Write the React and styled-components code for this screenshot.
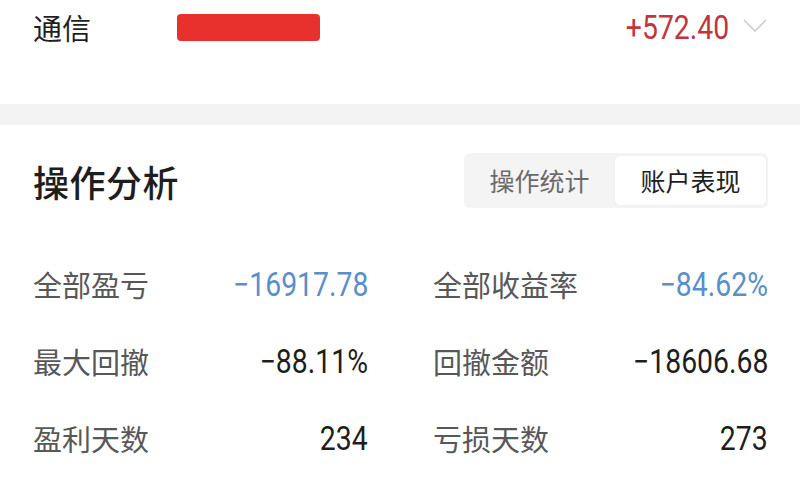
import React from "react"
import styled, { createGlobalStyle } from "styled-components"

const GlobalStyle = createGlobalStyle`
  html, body {
    margin: 0;
    padding: 0;
    background: #ffffff;
  }
  body {
    width: 800px;
    height: 500px;
    overflow: hidden;
    font-family: "Noto Sans CJK SC", "Noto Sans", sans-serif;
  }
`

const Page = styled.div`
  width: 800px;
`

const TopRow = styled.div`
  display: flex;
  align-items: center;
  height: 54px;
  padding: 0 32px 0 33px;
  margin-bottom: 50px;
`

const Industry = styled.span`
  font-size: 29px;
  line-height: 1;
  color: #1f1f1f;
  width: 144px;
`

const Masked = styled.div`
  width: 143px;
  height: 27px;
  border-radius: 4px;
  background: #e8302f;
`

// numbers in the shot use a tall, narrow face: Roboto squeezed sideways
const Num = styled.span`
  display: inline-block;
  font-family: Roboto, "Liberation Sans", sans-serif;
  font-size: 33px;
  line-height: 1;
  transform: scaleX(0.86);
  transform-origin: right center;
`

const Profit = styled(Num)`
  margin-left: auto;
  color: #c2353d;
`

const Chevron = styled.svg`
  width: 24px;
  height: 16px;
  margin-left: 14px;
  margin-right: 1px;
  margin-top: -2px;
`

const Band = styled.div`
  height: 21px;
  background: #f3f3f3;
`

const Section = styled.div`
  padding: 28px 32px 0 33px;
`

const TitleRow = styled.div`
  display: flex;
  align-items: center;
  justify-content: space-between;
  height: 55px;
`

const Title = styled.h2`
  margin: 0;
  font-size: 36px;
  font-weight: 500;
  line-height: 1;
  color: #1e1e1e;
  letter-spacing: 0.5px;
`

const Tabs = styled.div`
  display: flex;
  align-items: stretch;
  height: 55px;
  width: 304px;
  box-sizing: border-box;
  padding: 3px 2px 3px 0;
  border-radius: 6px;
  background: #f4f4f4;
`

const Tab = styled.div`
  flex: 1;
  display: flex;
  align-items: center;
  justify-content: center;
  border-radius: 5px;
  font-size: 25px;
  line-height: 1;
  color: ${({ active }) => (active ? "#1e1e1e" : "#6a6a6a")};
  background: ${({ active }) => (active ? "#ffffff" : "transparent")};
  box-shadow: ${({ active }) => (active ? "0 0 2px rgba(0,0,0,0.05)" : "none")};
`

const Stats = styled.div`
  display: grid;
  grid-template-columns: 335px 335px;
  column-gap: 65px;
  grid-auto-rows: 77px;
  margin-top: 38px;
`

const Stat = styled.div`
  display: flex;
  align-items: center;
  justify-content: space-between;
`

const Label = styled.span`
  font-size: 29px;
  line-height: 1;
  color: #585858;
`

const Value = styled(Num)`
  color: ${({ tone }) => (tone === "blue" ? "#5a8fc8" : "#1e1e1e")};
`

const stats = [
  { label: "全部盈亏", value: "−16917.78", tone: "blue" },
  { label: "全部收益率", value: "−84.62%", tone: "blue" },
  { label: "最大回撤", value: "−88.11%" },
  { label: "回撤金额", value: "−18606.68" },
  { label: "盈利天数", value: "234" },
  { label: "亏损天数", value: "273" },
  { label: "平均持仓天数", value: "12" },
  { label: "日均交易次数", value: "3" },
]

export default function App() {
  return (
    <Page>
      <GlobalStyle />
      <TopRow>
        <Industry>通信</Industry>
        <Masked />
        <Profit>+572.40</Profit>
        <Chevron viewBox="0 0 24 16">
          <polyline points="1,2 12,13 23,2" fill="none" stroke="#c8c8c8" strokeWidth="1.4" />
        </Chevron>
      </TopRow>
      <Band />
      <Section>
        <TitleRow>
          <Title>操作分析</Title>
          <Tabs>
            <Tab>操作统计</Tab>
            <Tab active>账户表现</Tab>
          </Tabs>
        </TitleRow>
        <Stats>
          {stats.map((s) => (
            <Stat key={s.label}>
              <Label>{s.label}</Label>
              <Value tone={s.tone}>{s.value}</Value>
            </Stat>
          ))}
        </Stats>
      </Section>
    </Page>
  )
}
